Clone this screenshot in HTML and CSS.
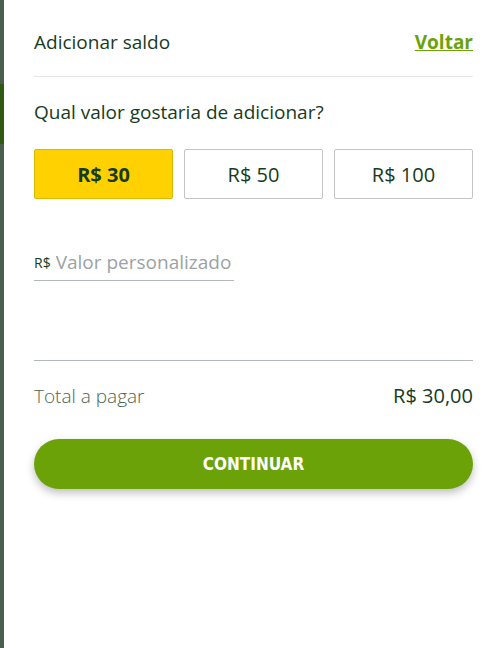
FILE: index.html
```html
<!DOCTYPE html>
<html lang="pt-BR">
  <head>
    <meta charset="UTF-8" />
    <meta name="viewport" content="width=device-width, initial-scale=1.0" />
    <title>Adicionar saldo</title>
    <link rel="stylesheet" href="styles.css">
  </head>
  <body>
    <div class="fundo">
      <div class="fundo-bloco"></div>
    </div>
    <div class="painel">
      <div class="cabecalho">
        <span class="titulo">Adicionar saldo</span>
        <a href="#" class="voltar">Voltar</a>
      </div>
      <p class="pergunta">Qual valor gostaria de adicionar?</p>
      <div class="valores">
        <button class="valor ativo">R$ 30</button>
        <button class="valor">R$ 50</button>
        <button class="valor">R$ 100</button>
      </div>
      <label class="campo">
        <span class="moeda">R$</span>
        <input type="text" placeholder="Valor personalizado" />
      </label>
      <div class="total">
        <span class="total-rotulo">Total a pagar</span>
        <span class="total-valor">R$ 30,00</span>
      </div>
      <button class="continuar">CONTINUAR</button>
    </div>
  </body>
</html>
```

FILE: styles.css
```css
html,
body {
  height: 100%;
}
body {
  margin: 0;
  display: flex;
  font-family: "Open Sans", Arial, sans-serif;
  color: #173a22;
  background: #4b5e4b;
}
.fundo {
  width: 4px;
  padding-top: 84px;
}
.fundo-bloco {
  height: 60px;
  background: #2e5a12;
}
.painel {
  flex: 1;
  background: white;
  padding: 0 20px 0 30px;
}
.cabecalho {
  padding-top: 8px;
  box-sizing: border-box;
  height: 77px;
  display: flex;
  align-items: center;
  justify-content: space-between;
  border-bottom: 1px solid #e6e6e6;
}
.titulo {
  font-size: 19px;
}
.voltar {
  font-size: 19px;
  font-weight: bold;
  color: #6aa207;
}
.pergunta {
  margin: 23px 0 0;
  font-size: 19px;
  line-height: 24px;
}
.valores {
  margin-top: 25px;
  display: grid;
  grid-template-columns: repeat(3, 1fr);
  gap: 11px;
}
.valor {
  height: 50px;
  background: white;
  border: 1px solid #c4c4c4;
  border-radius: 2px;
  font-family: inherit;
  font-size: 20px;
  color: #173a22;
}
.valor.ativo {
  background: #ffd100;
  border-color: #d8b800;
  font-weight: bold;
}
.campo {
  margin-top: 45px;
  width: 200px;
  height: 36px;
  display: flex;
  align-items: center;
  border-bottom: 1px solid #b3b9b9;
}
.moeda {
  font-size: 14px;
  margin-right: 5px;
}
.campo input {
  flex: 1;
  min-width: 0;
  border: none;
  padding: 0;
  outline: none;
  font-family: inherit;
  font-size: 19px;
  color: #173a22;
}
.campo input::placeholder {
  color: #9aa3a3;
}
.total {
  margin-top: 79px;
  padding-top: 23px;
  border-top: 1px solid #b3b9b9;
  display: flex;
  justify-content: space-between;
  font-size: 20px;
  line-height: 24px;
}
.total-rotulo {
  color: #4e6552;
  font-weight: 300;
  font-size: 19px;
}
.continuar {
  margin-top: 31px;
  width: 100%;
  height: 50px;
  border: none;
  border-radius: 25px;
  background: #6aa207;
  color: white;
  font-family: "DejaVu Sans Condensed", "DejaVu Sans", sans-serif;
  font-weight: bold;
  font-size: 17px;
  box-shadow: 0 4px 8px rgba(0, 0, 0, 0.25);
}
```
